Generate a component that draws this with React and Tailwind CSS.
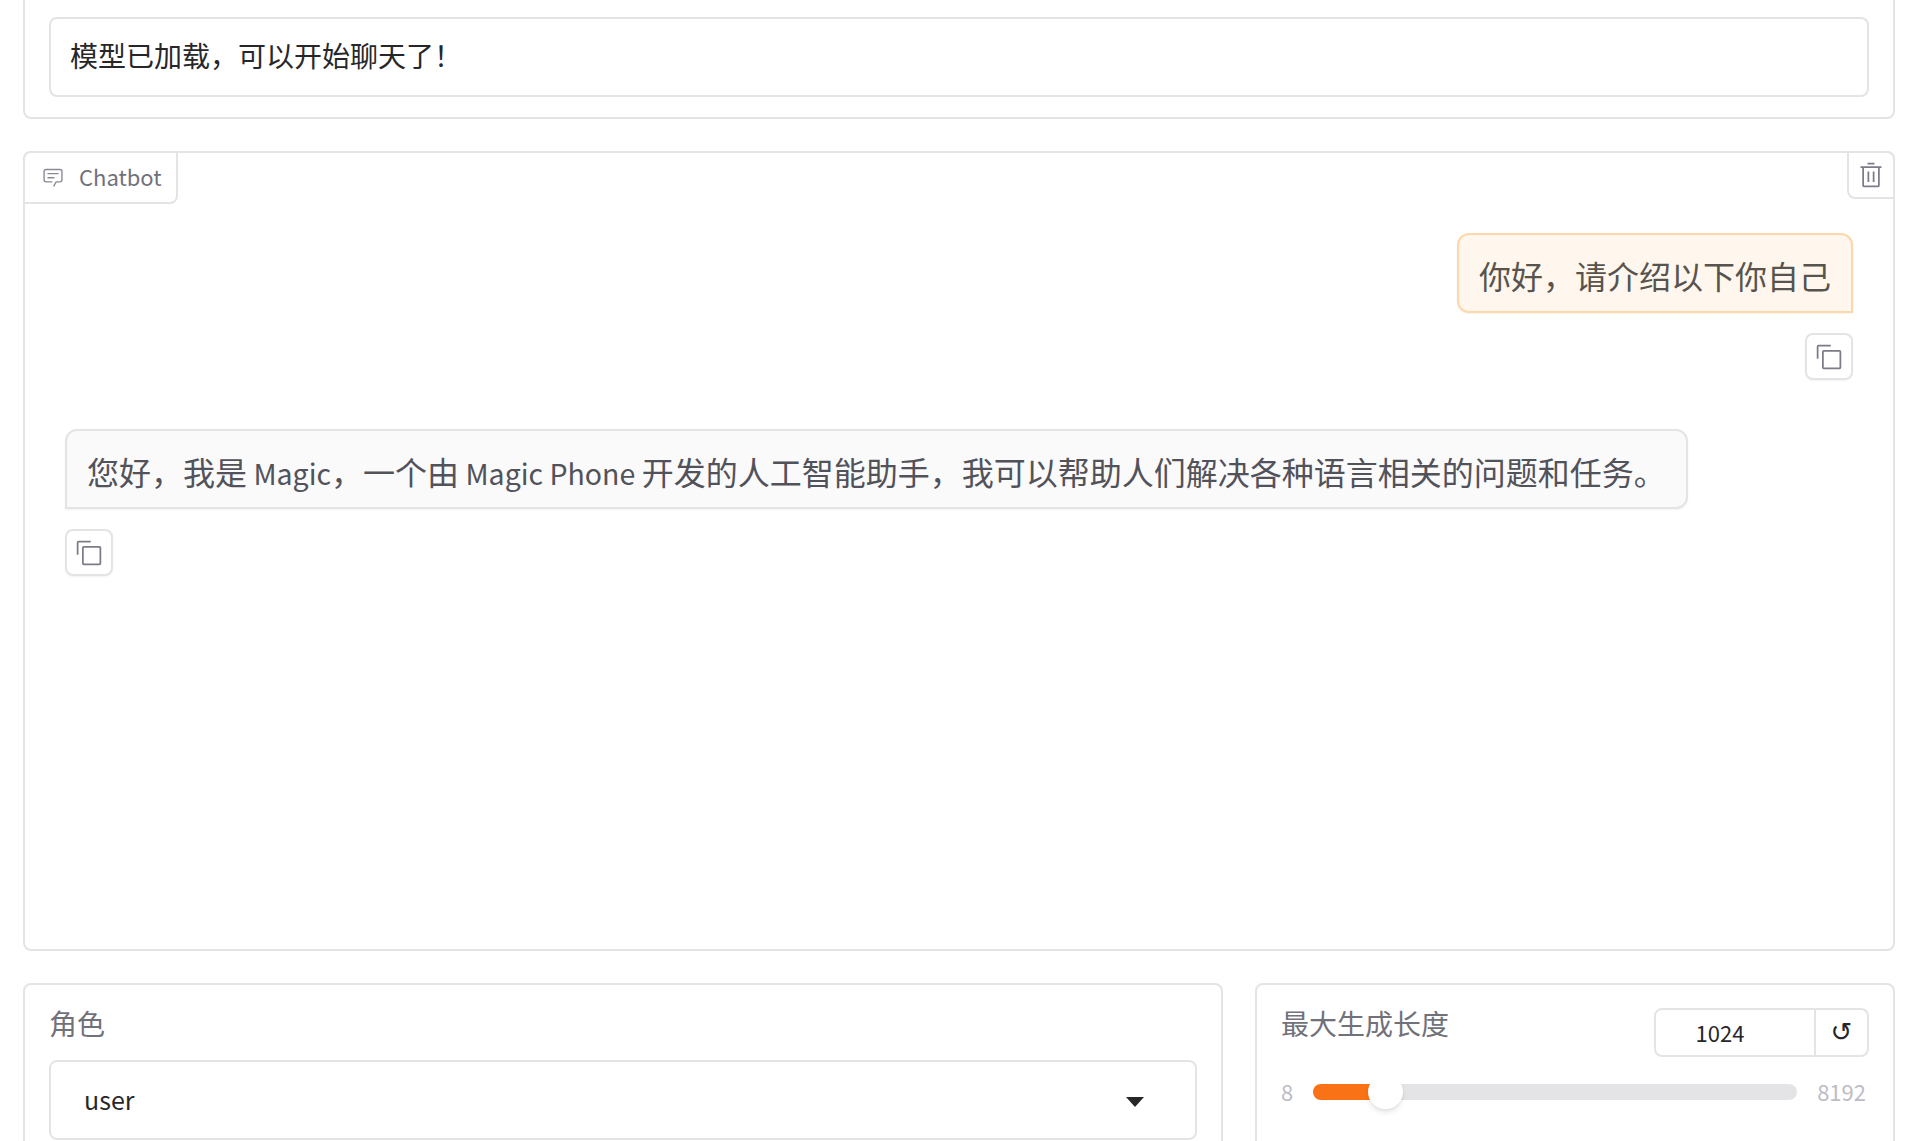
const FONT = "font-['Noto_Sans_CJK_SC','Noto_Sans_CJK_JP',sans-serif]";

function CopyIcon() {
  return (
    <svg viewBox="0 0 32 32" className="w-[28px] h-[28px] fill-[#7c7c88]">
      <path d="M28 10v18H10V10h18m0-2H10a2 2 0 0 0-2 2v18a2 2 0 0 0 2 2h18a2 2 0 0 0 2-2V10a2 2 0 0 0-2-2Z" />
      <path d="M4 18H2V4a2 2 0 0 1 2-2h14v2H4Z" />
    </svg>
  );
}

function CopyButton() {
  return (
    <button className="flex items-center justify-center w-[48px] h-[47px] rounded-[8px] border-2 border-[#e4e4e7] bg-white shadow-xs">
      <CopyIcon />
    </button>
  );
}

export default function App() {
  return (
    <div className={`${FONT} h-screen overflow-hidden bg-white pl-[23px] pr-[34px] flex flex-col`}>
      {/* status card */}
      <div className="-mt-[8px] shrink-0 rounded-[8px] border-2 border-[#e4e4e7] px-[24px] pt-[23px] pb-[20px]">
        <div className="h-[80px] flex items-center rounded-[8px] border-2 border-[#e4e4e7] pl-[19px] pr-[20px] pb-[4px] text-[28px] text-[#27272a]">
          模型已加载，可以开始聊天了！
        </div>
      </div>

      {/* chatbot */}
      <div className="relative mt-[32px] h-[800px] shrink-0 rounded-[8px] border-2 border-[#e4e4e7] px-[40px] pt-[80px]">
        <div className="absolute left-[-2px] top-[-2px] w-[155px] h-[53px] flex items-center gap-[15px] pl-[17px] pb-[2px] rounded-tl-[8px] rounded-br-[8px] border-2 border-[#e4e4e7] bg-white text-[22px] text-[#71717a]">
          <svg viewBox="0 0 32 32" className="w-[22px] h-[22px] fill-[#8a8a94]">
            <path d="M17.74 30L16 29l4-7h6a2 2 0 0 0 2-2V8a2 2 0 0 0-2-2H6a2 2 0 0 0-2 2v12a2 2 0 0 0 2 2h9v2H6a4 4 0 0 1-4-4V8a4 4 0 0 1 4-4h20a4 4 0 0 1 4 4v12a4 4 0 0 1-4 4h-4.84Z" />
            <path d="M8 10h16v2H8zm0 6h10v2H8z" />
          </svg>
          Chatbot
        </div>
        <button className="absolute right-[-2px] top-[-2px] w-[48px] h-[48px] flex items-center justify-center rounded-tr-[8px] rounded-bl-[8px] border-2 border-[#e4e4e7] bg-white">
          <svg viewBox="0 0 32 32" className="w-[28px] h-[28px] fill-[#7c7c88]">
            <path d="M12 12h2v12h-2zm6 0h2v12h-2z" />
            <path d="M4 6v2h2v20a2 2 0 0 0 2 2h16a2 2 0 0 0 2-2V8h2V6zm4 22V8h16v20zM12 2h8v2h-8z" />
          </svg>
        </button>

        <div className="flex flex-col items-end gap-[20px]">
          <div className="h-[80px] flex items-center px-[20px] pt-[3px] rounded-[12px] rounded-br-none border-2 border-[#fed7aa] bg-[#fff7ed] text-[32px] text-[#57534e] shadow-xs">
            你好，请介绍以下你自己
          </div>
          <CopyButton />
        </div>

        <div className="mt-[49px] flex flex-col items-start gap-[20px]">
          <div className="h-[80px] flex items-center px-[20px] pt-[3px] rounded-[12px] rounded-bl-none border-2 border-[#e4e4e7] bg-[#fafafa] text-[32px] text-[#52525b] shadow-xs">
            <span>
              您好，我是<span className="text-[28.5px]"> Magic</span>，一个由<span className="text-[28.5px]"> Magic Phone </span>开发的人工智能助手，我可以帮助人们解决各种语言相关的问题和任务。
            </span>
          </div>
          <CopyButton />
        </div>
      </div>

      {/* controls */}
      <div className="mt-[32px] grid grid-cols-[1200px_640px] gap-[32px] shrink-0">
        <div className="h-[200px] rounded-[8px] border-2 border-[#e4e4e7] px-[24px] pt-[18px]">
          <div className="text-[28px] leading-[40px] text-[#71717a]">角色</div>
          <div className="mt-[17px] h-[80px] flex items-center justify-between pl-[33px] pr-[51px] rounded-[8px] border-2 border-[#e4e4e7] text-[25px] text-[#27272a]">
            user
            <svg viewBox="0 0 18 10" className="w-[18px] h-[10px] mt-[4px] fill-[#27272a]">
              <path d="M0 0h18L9 10z" />
            </svg>
          </div>
        </div>

        <div className="h-[200px] rounded-[8px] border-2 border-[#e4e4e7] pl-[24px] pr-[24px] pt-[18px]">
          <div className="flex items-start justify-between">
            <div className="text-[28px] leading-[40px] text-[#71717a]">最大生成长度</div>
            <div className="w-[215px] h-[49px] mt-[5px] flex rounded-[8px] border-2 border-[#e4e4e7] text-[#27272a]">
              <div className="w-[158px] flex items-center justify-center pr-[30px] text-[22px]">1024</div>
              <div className="flex-1 flex items-center justify-center border-l-2 border-[#e4e4e7] text-[26px] font-['DejaVu_Sans',sans-serif] font-normal">↺</div>
            </div>
          </div>
          <div className="mt-[18px] flex items-center text-[22px] text-[#bdbdc5]">
            <span className="w-[32px]">8</span>
            <div className="relative w-[484px] h-[16px] rounded-full bg-[#e4e4e7]">
              <div className="h-full w-[60px] rounded-l-full bg-[#f97316]" />
              <div className="absolute left-[55px] top-[-9px] w-[35px] h-[34px] rounded-full bg-white shadow-md" />
            </div>
            <span className="ml-auto mr-[3px]">8192</span>
          </div>
        </div>
      </div>
    </div>
  );
}
